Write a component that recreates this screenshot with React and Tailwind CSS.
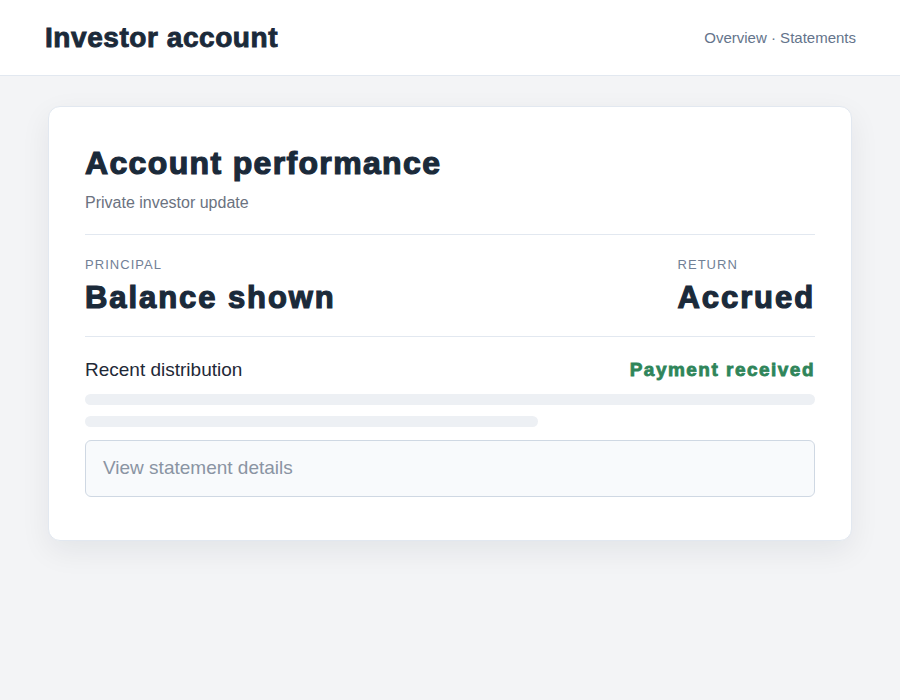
import React from "react";

const heavy = "font-['Liberation_Sans',Arial,sans-serif] font-black";

const Metric = ({ label, value }) => (
  <div>
    <div className="text-[13px] tracking-[0.08em] uppercase text-[#718096] leading-none">
      {label}
    </div>
    <div
      className={`${heavy} mt-[10px] text-[31px] leading-[1.1] tracking-[0.062em] text-[#1b2a3a] [-webkit-text-stroke:1.2px_#1b2a3a]`}
    >
      {value}
    </div>
  </div>
);

const App = () => {
  return (
    <div className="min-h-[700px] bg-[#f3f4f6] font-['Liberation_Sans',Arial,sans-serif]">
      <header className="h-[76px] bg-white border-b border-[#e2e8f0] px-11 flex items-center justify-between">
        <h1
          className={`${heavy} pl-px text-[28px] tracking-[0.02em] text-[#1b2a3a] [-webkit-text-stroke:0.9px_#1b2a3a]`}
        >
          Investor account
        </h1>
        <nav className="pt-[2px] text-[15px] text-[#64748b]">Overview · Statements</nav>
      </header>

      <main className="px-12 pt-[30px]">
        <section className="bg-white border border-[#e2e8f0] rounded-xl shadow-[0_10px_30px_rgba(15,23,42,0.07)] px-9 pt-9 pb-[43px]">
          <h2
            className={`${heavy} text-[32px] leading-[1.3] tracking-[0.042em] text-[#1b2a3a] [-webkit-text-stroke:1.2px_#1b2a3a]`}
          >
            Account performance
          </h2>
          <p className="mt-[10px] text-[16px] text-[#6b7280] leading-none">
            Private investor update
          </p>

          <div className="mt-[23px] border-t border-[#e2e8f0]" />

          <div className="pt-[23px] pb-[21px] flex justify-between items-start">
            <Metric label="Principal" value="Balance shown" />
            <Metric label="Return" value="Accrued" />
          </div>

          <div className="border-t border-[#e2e8f0]" />

          <div className="mt-[19px] flex items-center justify-between">
            <span className="text-[19px] text-[#1f2937]">Recent distribution</span>
            <span
              className={`${heavy} text-[19px] tracking-[0.078em] text-[#2f855a] [-webkit-text-stroke:0.8px_#2f855a]`}
            >
              Payment received
            </span>
          </div>

          <div className="mt-[10px] h-[11px] w-full rounded-full bg-[#edf0f4]" />
          <div className="mt-[11px] h-[11px] w-[62%] rounded-full bg-[#edf0f4]" />

          <button
            type="button"
            className="mt-[13px] w-full h-[57px] text-left px-[17px] rounded-md border border-[#cfd8e3] bg-[#f8fafc] text-[19px] text-[#8a94a3]"
          >
            View statement details
          </button>
        </section>
      </main>
    </div>
  );
};

export default App;
